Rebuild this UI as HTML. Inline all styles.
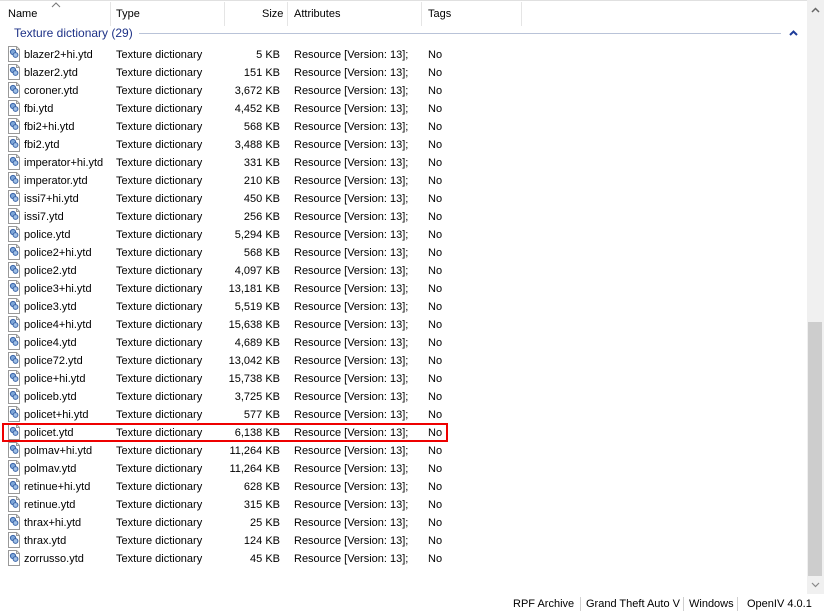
<!DOCTYPE html>
<html><head><style>
html,body{margin:0;width:824px;height:615px;overflow:hidden}
body{background:#fff;font-family:"Liberation Sans",sans-serif;font-size:11px;color:#000;position:relative}
.hdr{position:absolute;top:0;left:0;width:807px;height:25px;border-top:1px solid #e0e0e0}
.hdr span{position:absolute;top:7px}
.sep{position:absolute;top:1px;width:1px;height:24px;background:#e5e5e5}
.grp{position:absolute;top:26px;left:14px;color:#1e3287;font-size:12px}
.gl{position:absolute;top:33px;left:139px;width:642px;height:1px;background:#b9c3d8}
.row{position:absolute;left:0;height:18px;width:807px}
.row span{position:absolute;top:4px;white-space:nowrap}
.n{left:24px}.t{left:116px}.s{right:527px;text-align:right}.a{left:294px}.g{left:428px}
.row svg{position:absolute;left:8px;top:1px}
.sb{position:absolute;left:807px;top:0;width:17px;height:594px;background:#f0f0f0}
.th{position:absolute;left:808px;top:322px;width:14px;height:254px;background:#cdcdcd}
.st{position:absolute;top:595px;left:0;width:824px;height:20px;background:#fff}
.st span{position:absolute;top:3px;white-space:nowrap}
.vs{position:absolute;top:2px;width:1px;height:14px;background:#cfcfcf}
.red{position:absolute;left:2px;top:423px;width:442px;height:15px;border:2px solid #e00}
</style></head><body>
<div class="hdr">
<svg style="position:absolute;left:51px;top:1px" width="10" height="6"><path d="M1 5L5 1L9 5" stroke="#777" fill="none"/></svg>
<span style="left:8px">Name</span><span style="left:116px">Type</span><span style="left:262px">Size</span><span style="left:294px">Attributes</span><span style="left:428px">Tags</span>
<div class="sep" style="left:110px"></div><div class="sep" style="left:224px"></div><div class="sep" style="left:287px"></div><div class="sep" style="left:421px"></div><div class="sep" style="left:521px"></div>
</div>
<div class="grp">Texture dictionary (29)</div><div class="gl"></div>
<svg style="position:absolute;left:789px;top:30px" width="9" height="6"><path d="M1 5L4.5 1.5L8 5" stroke="#1e3c9a" stroke-width="2" fill="none"/></svg>
<div id="rows"></div>
<div class="red"></div>
<div class="sb"><svg style="position:absolute;left:4px;top:7px" width="9" height="6"><path d="M1 5L4.5 1.5L8 5" stroke="#666" stroke-width="1.5" fill="none"/></svg>
<svg style="position:absolute;left:4px;top:582px" width="9" height="6"><path d="M1 1L4.5 4.5L8 1" stroke="#888" stroke-width="1.2" fill="none"/></svg></div>
<div class="th"></div>
<div class="st">
<span style="left:513px">RPF Archive</span><div class="vs" style="left:580px"></div>
<span style="left:586px">Grand Theft Auto V</span><div class="vs" style="left:683px"></div>
<span style="left:689px">Windows</span><div class="vs" style="left:737px"></div>
<span style="left:747px">OpenIV 4.0.1</span>
</div>
<script>
var d=[["blazer2+hi.ytd","5"],["blazer2.ytd","151"],["coroner.ytd","3,672"],["fbi.ytd","4,452"],["fbi2+hi.ytd","568"],["fbi2.ytd","3,488"],["imperator+hi.ytd","331"],["imperator.ytd","210"],["issi7+hi.ytd","450"],["issi7.ytd","256"],["police.ytd","5,294"],["police2+hi.ytd","568"],["police2.ytd","4,097"],["police3+hi.ytd","13,181"],["police3.ytd","5,519"],["police4+hi.ytd","15,638"],["police4.ytd","4,689"],["police72.ytd","13,042"],["police+hi.ytd","15,738"],["policeb.ytd","3,725"],["policet+hi.ytd","577"],["policet.ytd","6,138"],["polmav+hi.ytd","11,264"],["polmav.ytd","11,264"],["retinue+hi.ytd","628"],["retinue.ytd","315"],["thrax+hi.ytd","25"],["thrax.ytd","124"],["zorrusso.ytd","45"]];
var ic='<svg width="12" height="16"><path d="M0.5 0.5H8.5L11.5 3.5V15.5H0.5Z" fill="#fff" stroke="#999"/><path d="M8.5 0.5V3.5H11.5" fill="none" stroke="#999"/><circle cx="5" cy="6" r="2.6" fill="#7ea6d8" stroke="#3a64a8"/><circle cx="7.5" cy="9" r="2.4" fill="#9fbfe6" stroke="#3a64a8"/></svg>';
var h='';d.forEach(function(r,i){h+='<div class="row" style="top:'+(45+i*18)+'px">'+ic+'<span class="n">'+r[0]+'</span><span class="t">Texture dictionary</span><span class="s">'+r[1]+' KB</span><span class="a">Resource [Version: 13];</span><span class="g">No</span></div>'});
document.getElementById('rows').innerHTML=h;
</script>
</body></html>
